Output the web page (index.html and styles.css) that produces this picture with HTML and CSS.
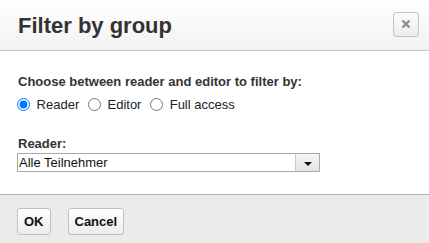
FILE: index.html
```html
<!DOCTYPE html>
<html lang="en">
<head>
  <meta charset="UTF-8" />
  <title>Filter by group</title>
  <link rel="stylesheet" href="styles.css">
</head>
<body>
  <div class="dialog">
    <div class="dialog-header">
      <h1>Filter by group</h1>
      <button class="close" title="Close">
        <svg width="10" height="10" viewBox="0 0 10 10">
          <path d="M1.5 1.5 L8.5 8.5 M8.5 1.5 L1.5 8.5" stroke="#8c8c8c" stroke-width="2.4" />
        </svg>
      </button>
    </div>

    <div class="dialog-body">
      <p class="label">Choose between reader and editor to filter by:</p>
      <div class="radios">
        <label><input type="radio" name="mode" checked /> Reader</label>
        <label><input type="radio" name="mode" /> Editor</label>
        <label><input type="radio" name="mode" /> Full access</label>
      </div>

      <p class="label reader-label">Reader:</p>
      <div class="select">
        <span class="select-value">Alle Teilnehmer</span>
        <span class="select-arrow"></span>
      </div>
    </div>

    <div class="dialog-footer">
      <button class="btn">OK</button>
      <button class="btn">Cancel</button>
    </div>
  </div>
</body>
</html>
```

FILE: styles.css
```css
body {
  margin: 0;
  font-family: 'Liberation Sans', Arial, sans-serif;
  color: #333;
  background: #fff;
}

.dialog {
  width: 429px;
  height: 243px;
  display: flex;
  flex-direction: column;
}

.dialog-header {
  height: 50px;
  border-bottom: 1px solid #c8c8c8;
  background: linear-gradient(#ffffff, #f2f2f2);
  display: flex;
  align-items: center;
  justify-content: space-between;
  padding: 0 10px 0 18px;
}

h1 {
  margin: 0;
  font-size: 22px;
  font-weight: bold;
  color: #333;
  padding-top: 2px;
}

.close {
  width: 26px;
  height: 25px;
  margin-top: -2px;
  border: 1px solid #c4c4c4;
  border-radius: 3px;
  background: linear-gradient(#fdfdfd, #ececec);
  padding: 0;
  display: flex;
  align-items: center;
  justify-content: center;
}

.dialog-body {
  flex: 1;
  padding: 14px 18px 0 17px;
}

.label {
  margin: 0 0 0 1px;
  font-size: 13px;
  font-weight: bold;
  line-height: 16px;
  padding-top: 9px;
}

.radios {
  margin: 5px 0 0 -5px;
  font-size: 13px;
  line-height: 18px;
  color: #222;
}

.radios input {
  width: 13px;
  height: 13px;
  vertical-align: -2px;
}

.reader-label {
  padding-top: 22px;
}

.select {
  width: 301px;
  height: 17px;
  margin-top: 1px;
  border: 1px solid #a9a9a9;
  display: flex;
  font-size: 13px;
  color: #111;
}

.select-value {
  flex: 1;
  padding-left: 1px;
  line-height: 17px;
}

.select-arrow {
  width: 23px;
  border-left: 1px solid #c8c8c8;
  background: linear-gradient(#f7f7f7, #e3e3e3);
  display: flex;
  align-items: center;
  justify-content: center;
}

.select-arrow::after {
  content: "";
  border-left: 4px solid transparent;
  border-right: 4px solid transparent;
  border-top: 4px solid #111;
  margin-top: 2px;
}

.dialog-footer {
  height: 48px;
  border-top: 1px solid #b4b4b4;
  background: #ebebeb;
  display: flex;
  align-items: center;
  gap: 17px;
  padding: 0 17px;
}

.btn {
  height: 27px;
  padding: 0 6px;
  border: 1px solid #c0c0c0;
  border-radius: 3px;
  background: linear-gradient(#ffffff, #ececec);
  font-family: 'Liberation Sans', Arial, sans-serif;
  font-size: 13px;
  font-weight: bold;
  color: #111;
  margin-top: 5px;
}
```
